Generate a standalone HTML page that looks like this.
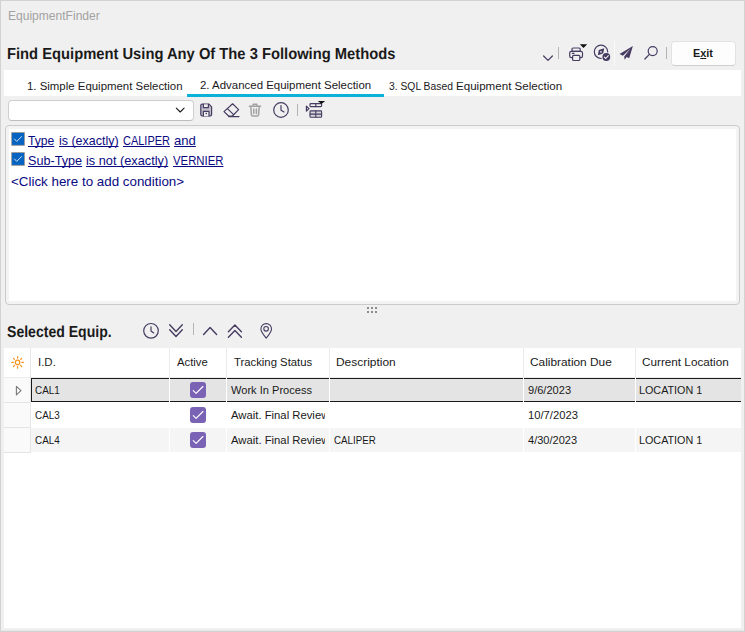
<!DOCTYPE html>
<html><head><meta charset="utf-8"><title>EquipmentFinder</title>
<style>
html,body{margin:0;padding:0;}
body{width:745px;height:632px;position:relative;overflow:hidden;background:#f0f0f0;font-family:"Liberation Sans",sans-serif;color:#1a1a1a;}
.abs{position:absolute;}
.t{position:absolute;white-space:nowrap;line-height:1;transform-origin:0 0;}
svg{position:absolute;left:0;top:0;overflow:visible;}
#win{left:0;top:0;width:743px;height:630px;border:1px solid #d2d2d2;background:#f0f0f0;box-shadow:inset 0 -1px 0 #e6e6e6;}
#tabs{left:4px;top:70px;width:737px;height:26px;background:#fff;}
#tabline{left:187px;top:94px;width:197px;height:3px;background:#0bb1d6;}
#combo{left:8px;top:100px;width:184px;height:19px;background:#fff;border:1px solid #cfcfcf;border-bottom-color:#bdbdbd;border-radius:4px;}
#cond{left:5px;top:125px;width:733px;height:178px;background:#f3f3f3;border:1px solid #cbcbcb;border-radius:4px;}
#condin{left:9px;top:129px;width:727px;height:172px;background:#fff;}
.u{text-decoration:underline;text-decoration-thickness:1px;text-underline-offset:1px;text-decoration-skip-ink:none;}
.cb{width:11px;height:11px;background:#0563c1;border:1px solid #7f8ea6;}
#exitb{left:671px;top:41px;width:63px;height:23px;background:#fdfdfd;border:1px solid #e2e2e2;border-bottom-color:#cfcfcf;border-radius:4px;}
#grid{left:4px;top:348px;width:737px;height:280px;background:#fff;}
.pchk{width:16px;height:16px;background:#7a63b5;border-radius:3px;}
.vs{position:absolute;width:1px;background:#b4b4b4;}
.ic{stroke:#463c62;fill:none;stroke-width:1.2;stroke-linecap:round;stroke-linejoin:round;}
.icf{fill:#463c62;stroke:none;}
</style></head><body>
<div id="win" class="abs"></div>
<div id="tabs" class="abs"></div>
<div id="tabline" class="abs"></div>
<div id="combo" class="abs"></div>
<div id="exitb" class="abs"></div>
<div class="vs" style="left:558px;top:47px;height:12px"></div>
<div class="abs" style="left:614px;top:41px;width:1px;height:25px;background:#fafafa"></div>
<div class="vs" style="left:666px;top:47px;height:12px"></div>
<div class="vs" style="left:297px;top:104px;height:12px"></div>
<div class="vs" style="left:193px;top:323px;height:12px"></div>
<div id="cond" class="abs"></div>
<div id="condin" class="abs"></div>
<div id="grid" class="abs"></div>
<div class="abs" style="left:4px;top:377px;width:737px;height:1px;background:#ececec"></div>
<div class="abs" style="left:4px;top:378px;width:26px;height:75px;background:#fafafa"></div>
<div class="abs" style="left:4px;top:402px;width:27px;height:1px;background:#e4e4e4"></div>
<div class="abs" style="left:4px;top:427px;width:27px;height:1px;background:#e4e4e4"></div>
<div class="abs" style="left:4px;top:452px;width:27px;height:1px;background:#e4e4e4"></div>
<div class="abs" style="left:30px;top:348px;width:1px;height:105px;background:#e6e6e6"></div>
<div class="abs" style="left:31px;top:378px;width:710px;height:24px;background:#e4e4e4;border-top:1px solid #1a1a1a;border-bottom:1px solid #1a1a1a;border-left:1px solid #1a1a1a;box-sizing:border-box"></div>
<div class="abs" style="left:31px;top:428px;width:710px;height:24px;background:#f5f5f5"></div>
<div class="abs" style="left:169px;top:348px;width:1px;height:29px;background:#ebebeb"></div>
<div class="abs" style="left:169px;top:378px;width:1px;height:74px;background:#fff"></div>
<div class="abs" style="left:226px;top:348px;width:1px;height:29px;background:#ebebeb"></div>
<div class="abs" style="left:226px;top:378px;width:1px;height:74px;background:#fff"></div>
<div class="abs" style="left:329px;top:348px;width:1px;height:29px;background:#ebebeb"></div>
<div class="abs" style="left:329px;top:378px;width:1px;height:74px;background:#fff"></div>
<div class="abs" style="left:523px;top:348px;width:1px;height:29px;background:#ebebeb"></div>
<div class="abs" style="left:523px;top:378px;width:1px;height:74px;background:#fff"></div>
<div class="abs" style="left:635px;top:348px;width:1px;height:29px;background:#ebebeb"></div>
<div class="abs" style="left:635px;top:378px;width:1px;height:74px;background:#fff"></div>
<div class="abs pchk" style="left:190px;top:382px"></div>
<svg width="745" height="632"><path d="M193.3 390.7 L196.1 393.3 L202.9 386.5" stroke="#fff" stroke-width="1.15" fill="none" stroke-linecap="round" stroke-linejoin="round"/></svg>
<div class="abs pchk" style="left:190px;top:407px"></div>
<svg width="745" height="632"><path d="M193.3 415.7 L196.1 418.3 L202.9 411.5" stroke="#fff" stroke-width="1.15" fill="none" stroke-linecap="round" stroke-linejoin="round"/></svg>
<div class="abs pchk" style="left:190px;top:432px"></div>
<svg width="745" height="632"><path d="M193.3 440.7 L196.1 443.3 L202.9 436.5" stroke="#fff" stroke-width="1.15" fill="none" stroke-linecap="round" stroke-linejoin="round"/></svg>
<svg width="745" height="632">
<path class="ic" d="M543.6 56 L548 60.4 L552.4 56"/>
<rect class="ic" x="572" y="48" width="8.2" height="3.4" rx="1"/>
<rect class="ic" x="569.7" y="51.4" width="12.8" height="6.2" rx="1.6"/>
<rect x="572.6" y="55.3" width="7.2" height="5.2" rx="1" class="ic" style="fill:#f0f0f0"/>
<path class="ic" d="M572.3 53.4 H574"/>
<path d="M579.8 44.2 H587.2 L583.5 47.9 Z" fill="#111"/>
<circle class="ic" cx="601" cy="51.8" r="6.7"/>
<path class="icf" d="M604.2 48.3 L603.2 53.6 L597.8 55.3 L598.8 50 Z"/>
<circle cx="601" cy="51.8" r="0.9" fill="#f0f0f0"/>
<circle cx="606.3" cy="57" r="4.8" fill="#f0f0f0"/>
<circle class="icf" cx="606.3" cy="57" r="3.9"/>
<path d="M604.4 57.1 L605.8 58.5 L608.3 55.7" stroke="#f0f0f0" stroke-width="1.1" fill="none" stroke-linecap="round" stroke-linejoin="round"/>
<path class="icf" d="M632.9 46 L619.5 54.1 L622.9 55.7 L630.6 48.6 L624.2 56.4 L624.6 59.7 L626.7 57.1 L629.2 58.3 Z"/>
<circle class="ic" cx="652.7" cy="51.1" r="4.5"/>
<path class="ic" d="M649.4 54.3 L644.9 59"/>
<path d="M176.3 108.2 L180.2 112 L184.1 108.2" stroke="#1a1a1a" stroke-width="1.1" fill="none" stroke-linecap="round" stroke-linejoin="round"/>
<path class="ic" style="fill:rgba(70,60,98,0.28)" d="M200.8 105.6 Q200.8 104.2 202.2 104.2 H209 L211.6 106.8 V114.6 Q211.6 116 210.2 116 H202.2 Q200.8 116 200.8 114.6 Z"/>
<path class="ic" style="fill:#f0f0f0" d="M203.4 104.4 V107.6 H208.4 V104.4"/>
<path class="ic" style="fill:#f0f0f0" d="M203.4 116 V111.4 H209 V116"/>
<rect class="icf" x="205.6" y="112.8" width="1.4" height="1.4"/>
<path class="ic" d="M232.6 103.8 L238.6 109.6 L232.4 116 H228.6 L224 111.6 Z"/>
<path class="ic" d="M227.4 108.6 L233.6 114.6"/>
<path class="ic" d="M228.6 116.6 H239"/>
<g stroke="#a2a2a2" fill="none" stroke-width="1.5" stroke-linecap="round" stroke-linejoin="round">
<path d="M249.4 106.2 H260.6"/><path d="M253.2 106 V104.2 H256.8 V106"/>
<path d="M250.8 106.6 L251.4 114.8 Q251.5 116 252.7 116 H257.3 Q258.5 116 258.6 114.8 L259.2 106.6"/>
<path d="M253.8 109 V113.4"/><path d="M256.4 109 V113.4"/></g>
<circle class="ic" cx="281" cy="110" r="7.3"/>
<path class="ic" d="M281 105.6 V110.2 L284 112"/>
<path class="ic" d="M306.4 106.2 L309 108.6 L306.4 111 Z" stroke-width="0.9"/>
<rect class="ic" x="310" y="103.6" width="11.6" height="3" rx="0.8" stroke-width="1.1"/>
<path class="ic" d="M315.8 103.6 V106.6" stroke-width="1.1"/>
<rect class="ic" x="310" y="110.9" width="11.6" height="6.4" rx="0.8" style="stroke-width:1.1;fill:rgba(70,60,98,0.15)"/>
<path class="ic" d="M310 114.1 H321.6 M315.8 110.9 V117.3" style="stroke-width:1.1"/>
<path d="M317.8 101 H325.2 L321.5 104 Z" fill="#111"/>
<circle class="ic" cx="151" cy="330.8" r="7.3"/>
<path class="ic" d="M151 326.8 V331 L153.7 332.9"/>
<path class="ic" style="stroke-width:1.4" d="M169.7 324.8 L176 331.5 L182.3 324.8 M169.7 329.7 L176 336.4 L182.3 329.7"/>
<path class="ic" style="stroke-width:1.4" d="M203.6 334.4 L210.1 327.4 L216.6 334.4"/>
<path class="ic" style="stroke-width:1.4" d="M228.4 331.7 L234.9 325 L241.4 331.7 M228.4 337.2 L234.9 330.5 L241.4 337.2"/>
<path class="ic" d="M266.2 338.2 C263 334 260.9 331.6 260.9 328.9 A5.3 5.3 0 0 1 271.5 328.9 C271.5 331.6 269.4 334 266.2 338.2 Z" style="stroke-width:1.1"/>
<circle class="ic" cx="266.1" cy="328.8" r="2.3" style="stroke-width:1.1"/>
<g stroke="#f7931e" stroke-width="1.2" fill="none" stroke-linecap="round"><circle cx="17.6" cy="362.4" r="2.2"/>
<path d="M21.90 362.40 L23.40 362.40"/>
<path d="M20.64 365.44 L21.70 366.50"/>
<path d="M17.60 366.70 L17.60 368.20"/>
<path d="M14.56 365.44 L13.50 366.50"/>
<path d="M13.30 362.40 L11.80 362.40"/>
<path d="M14.56 359.36 L13.50 358.30"/>
<path d="M17.60 358.10 L17.60 356.60"/>
<path d="M20.64 359.36 L21.70 358.30"/>
</g>
<path d="M16.4 386.4 L21 390.6 L16.4 394.8 Z" stroke="#7a7a7a" stroke-width="1.1" fill="none" stroke-linejoin="round"/>
<rect x="11.7" y="132.6" width="12.7" height="12.7" fill="#0563c1" stroke="#9a958f" stroke-width="0.8"/>
<path d="M14.5 139 L16.7 141.4 L21.6 136.6" stroke="#cfe0f5" stroke-width="1" fill="none" stroke-linecap="round" stroke-linejoin="round"/>
<rect x="11.7" y="152.6" width="12.7" height="12.7" fill="#0563c1" stroke="#9a958f" stroke-width="0.8"/>
<path d="M14.5 159 L16.7 161.4 L21.6 156.6" stroke="#cfe0f5" stroke-width="1" fill="none" stroke-linecap="round" stroke-linejoin="round"/>
<rect x="367" y="307" width="2" height="2" fill="#8c8c8c"/>
<rect x="367" y="311" width="2" height="2" fill="#8c8c8c"/>
<rect x="371" y="307" width="2" height="2" fill="#8c8c8c"/>
<rect x="371" y="311" width="2" height="2" fill="#8c8c8c"/>
<rect x="375" y="307" width="2" height="2" fill="#8c8c8c"/>
<rect x="375" y="311" width="2" height="2" fill="#8c8c8c"/>
</svg>
<div id="cap" class="t" style="left:7.60px;top:10.00px;font-size:12px;transform:scale(1.0044,1.0000);color:#a2a2a2;">EquipmentFinder</div>
<div id="title" class="t" style="left:6.87px;top:47.00px;font-size:15.85px;transform:scale(0.9303,1.0000);color:#1a1a1a;font-weight:bold;text-rendering:geometricPrecision;">Find Equipment Using Any Of The 3 Following Methods</div>
<div id="tab1" class="t" style="left:26.62px;top:80.00px;font-size:11.7px;transform:scale(0.9772,1.0000);color:#1a1a1a;">1. Simple Equipment Selection</div>
<div id="tab2" class="t" style="left:199.82px;top:79.00px;font-size:11.7px;transform:scale(0.9792,1.0000);color:#1a1a1a;">2. Advanced Equipment Selection</div>
<div id="tab3" class="t" style="left:388.92px;top:80.00px;font-size:11.7px;transform:scale(0.8831,1.0000);color:#1a1a1a;">3. SQL Based</div>
<div id="tab3b" class="t" style="left:456.01px;top:80.00px;font-size:11.7px;transform:scale(0.9906,1.0000);color:#1a1a1a;">Equipment Selection</div>
<div id="exit" class="t" style="left:692.67px;top:47.00px;font-size:11.7px;transform:scale(0.9300,1.0000);color:#1a1a1a;font-weight:bold;">E<span class=u>x</span>it</div>
<div id="l1a" class="t u" style="left:28.00px;top:135.00px;font-size:12.7px;transform:scale(0.9571,1.0000);color:#0a0a82;">Type</div>
<div id="l1b" class="t u" style="left:59.10px;top:135.00px;font-size:12.7px;transform:scale(0.9820,1.0000);color:#0a0a82;">is (exactly)</div>
<div id="l1c" class="t u" style="left:123.30px;top:135.00px;font-size:12.7px;transform:scale(0.8648,1.0000);color:#0a0a82;">CALIPER</div>
<div id="l1d" class="t u" style="left:174.00px;top:135.00px;font-size:12.7px;transform:scale(1.0333,1.0000);color:#0a0a82;">and</div>
<div id="l2a" class="t u" style="left:28.00px;top:155.00px;font-size:12.7px;transform:scale(0.9963,1.0000);color:#0a0a82;">Sub-Type</div>
<div id="l2b" class="t u" style="left:86.20px;top:155.00px;font-size:12.7px;transform:scale(1.0049,1.0000);color:#0a0a82;">is not (exactly)</div>
<div id="l2c" class="t u" style="left:173.00px;top:155.00px;font-size:12.7px;transform:scale(0.8947,1.0000);color:#0a0a82;">VERNIER</div>
<div id="l3" class="t" style="left:10.55px;top:176.20px;font-size:12.7px;transform:scale(1.0534,1.0000);color:#0a0a82;">&lt;Click here to add condition&gt;</div>
<div id="sel" class="t" style="left:6.92px;top:325.10px;font-size:15.95px;transform:scale(0.8821,1.0000);color:#1a1a1a;font-weight:bold;text-rendering:geometricPrecision;">Selected Equip.</div>
<div id="h1" class="t" style="left:37.72px;top:356.00px;font-size:11.7px;transform:scale(0.9812,1.0000);color:#1a1a1a;">I.D.</div>
<div id="h2" class="t" style="left:177.00px;top:356.00px;font-size:11.7px;transform:scale(0.9677,1.0000);color:#1a1a1a;">Active</div>
<div id="h3" class="t" style="left:234.00px;top:356.00px;font-size:11.7px;transform:scale(0.9679,1.0000);color:#1a1a1a;">Tracking Status</div>
<div id="h4" class="t" style="left:336.38px;top:356.00px;font-size:11.7px;transform:scale(1.0211,1.0000);color:#1a1a1a;">Description</div>
<div id="h5" class="t" style="left:530.38px;top:356.00px;font-size:11.7px;transform:scale(1.0152,1.0000);color:#1a1a1a;">Calibration Due</div>
<div id="h6" class="t" style="left:642.30px;top:356.00px;font-size:11.7px;transform:scale(1.0035,1.0000);color:#1a1a1a;">Current Location</div>
<div id="r1a" class="t" style="left:34.68px;top:385.00px;font-size:10.8px;transform:scale(0.9154,1.0000);color:#1a1a1a;">CAL1</div>
<div id="r1c" class="t" style="left:231.40px;top:385.00px;font-size:10.8px;transform:scale(1.0253,1.0000);color:#1a1a1a;">Work In Process</div>
<div id="r1e" class="t" style="left:528.40px;top:385.00px;font-size:10.8px;transform:scale(1.0238,1.0000);color:#1a1a1a;">9/6/2023</div>
<div id="r1f" class="t" style="left:639.40px;top:385.00px;font-size:10.8px;transform:scale(0.9968,1.0000);color:#1a1a1a;">LOCATION 1</div>
<div id="r2a" class="t" style="left:34.68px;top:410.00px;font-size:10.8px;transform:scale(0.9154,1.0000);color:#1a1a1a;">CAL3</div>
<div class="abs" style="left:227px;top:399px;width:98px;height:26px;overflow:hidden"><div id="r2c" class="t" style="left:231.40px;top:410.00px;font-size:10.8px;transform:scale(1.0458,1.0000);color:#1a1a1a;left:4.40px;top:11.00px">Await. Final Review</div></div>
<div id="r2e" class="t" style="left:527.56px;top:410.00px;font-size:10.8px;transform:scale(1.0383,1.0000);color:#1a1a1a;">10/7/2023</div>
<div id="r3a" class="t" style="left:34.68px;top:435.00px;font-size:10.8px;transform:scale(0.9154,1.0000);color:#1a1a1a;">CAL4</div>
<div class="abs" style="left:227px;top:424px;width:98px;height:26px;overflow:hidden"><div id="r3c" class="t" style="left:231.40px;top:435.00px;font-size:10.8px;transform:scale(1.0458,1.0000);color:#1a1a1a;left:4.40px;top:11.00px">Await. Final Review</div></div>
<div id="r3d" class="t" style="left:333.50px;top:435.00px;font-size:10.8px;transform:scale(0.9022,1.0000);color:#1a1a1a;">CALIPER</div>
<div id="r3e" class="t" style="left:528.40px;top:435.00px;font-size:10.8px;transform:scale(1.0208,1.0000);color:#1a1a1a;">4/30/2023</div>
<div id="r3f" class="t" style="left:639.40px;top:435.00px;font-size:10.8px;transform:scale(0.9968,1.0000);color:#1a1a1a;">LOCATION 1</div>
</body></html>
